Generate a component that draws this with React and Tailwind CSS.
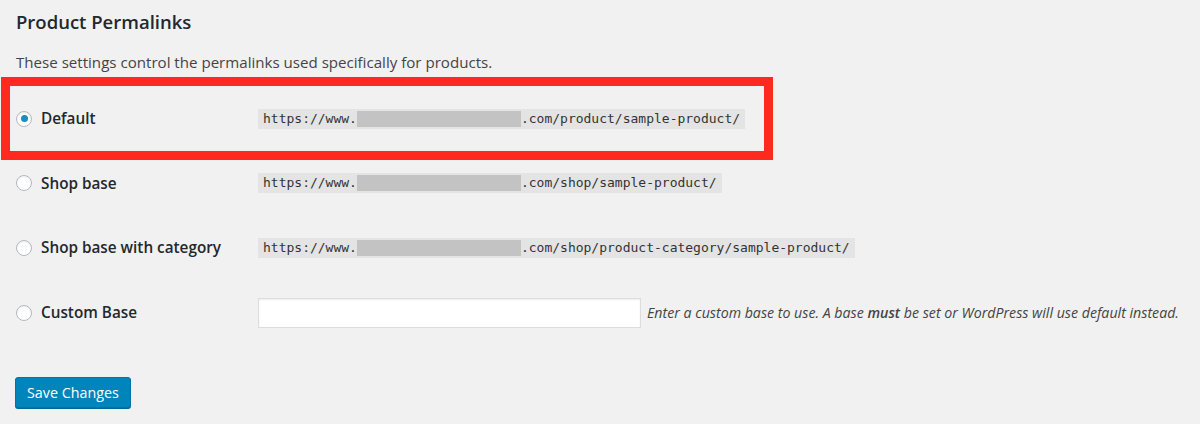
import React from 'react';

const Radio = ({ checked }) => (
  <span className="relative flex h-4 w-4 shrink-0 items-center justify-center rounded-full border border-[#b4b9be] bg-white shadow-[inset_0_1px_2px_rgba(0,0,0,0.07)]">
    {checked && <span className="h-[7px] w-[7px] rounded-full bg-[#1e8cbe]" />}
  </span>
);

const Url = ({ path }) => (
  <code className="flex items-center bg-[#e4e4e4] px-[5px] py-[2px] font-['DejaVu_Sans_Mono',monospace] text-[13px] leading-[16px] text-[#333]">
    <span>https://www.</span>
    <span className="h-4 w-[164px] bg-[#c3c3c3]" />
    <span>{path}</span>
  </code>
);

const Row = ({ label, checked, children, h }) => (
  <div className={`flex items-center ${h}`}>
    <label className="flex w-[242px] items-center gap-[9px] text-[15.3px] font-semibold text-[#23282d]">
      <Radio checked={checked} />
      {label}
    </label>
    {children}
  </div>
);

export default function App() {
  return (
    <div className="relative h-[424px] w-[1200px] overflow-hidden bg-[#f1f1f1] font-['Open_Sans',sans-serif]">
      <div className="pl-4 pt-[8px]">
        <h2 className="text-[18.5px] font-semibold leading-[28px] text-[#23282d]">Product Permalinks</h2>
        <p className="mt-[16px] text-[15.1px] leading-[20px] text-[#444]">
          These settings control the permalinks used specifically for products.
        </p>

        <div className="mt-[14px]">
          <Row label="Default" checked h="h-[65px]">
            <Url path=".com/product/sample-product/" />
          </Row>
          <Row label="Shop base" h="h-[64px]">
            <Url path=".com/shop/sample-product/" />
          </Row>
          <Row label="Shop base with category" h="h-[65px]">
            <Url path=".com/shop/product-category/sample-product/" />
          </Row>
          <Row label="Custom Base" h="h-[65px]">
            <input
              type="text"
              className="h-[30px] w-[383px] border border-[#ddd] bg-white shadow-[inset_0_1px_2px_rgba(0,0,0,0.07)] outline-none"
            />
            <span className="ml-[6px] text-[14.2px] italic text-[#444]">
              Enter a custom base to use. A base <strong className="font-semibold">must</strong> be set or WordPress will use default instead.
            </span>
          </Row>
        </div>

        <button className="ml-[-1px] mt-[32px] h-[31px] rounded-[3px] border border-[#0073aa] bg-[#0085ba] px-[11px] text-[14.3px] leading-[28px] text-white shadow-[0_1px_0_#006799]">
          Save Changes
        </button>
      </div>

      {/* annotation box */}
      <div className="pointer-events-none absolute left-[1px] top-[77px] h-[83px] w-[772px] border-[9px] border-[#fe2a1f]" />
    </div>
  );
}
